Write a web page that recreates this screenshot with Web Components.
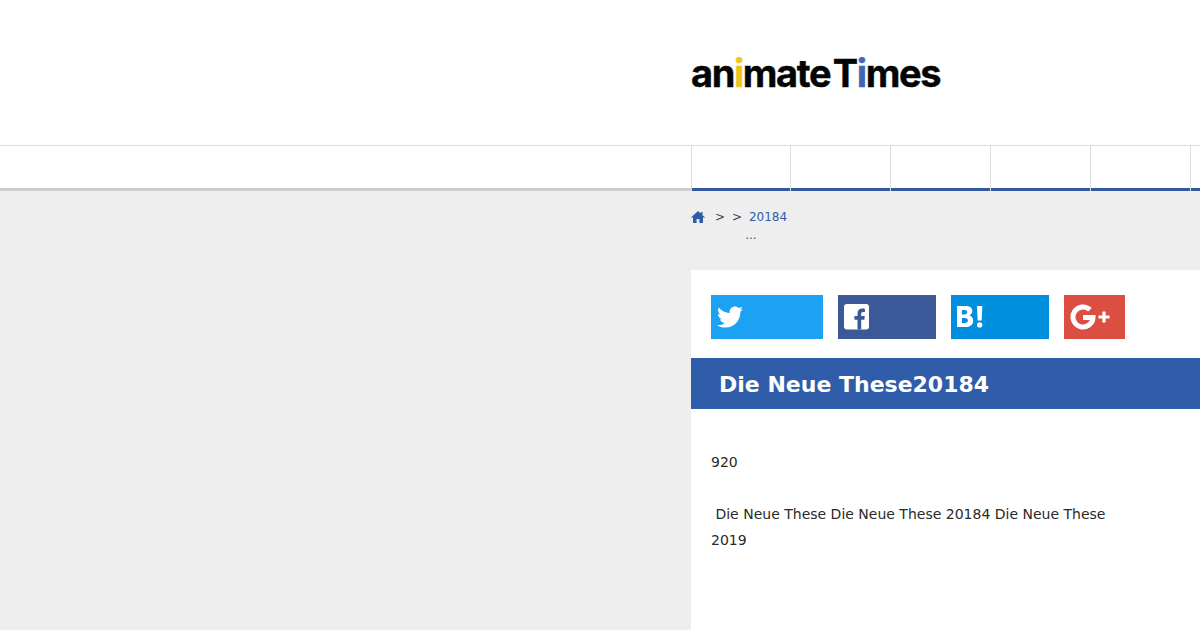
<!DOCTYPE html>
<html lang="ja">
<head>
<meta charset="utf-8">
<title>animate Times</title>
<style>
	html, body { margin: 0; height: 630px; overflow: hidden; background: #eee; }
	body { font-family: "DejaVu Sans", sans-serif; }
	at-page { height: 630px; }
</style>
</head>
<body>
<at-page>
	<at-header slot="header"></at-header>
	<at-nav slot="nav" count="6"></at-nav>
	<at-breadcrumb slot="crumb"></at-breadcrumb>
	<at-article slot="main">
		<at-share slot="share"></at-share>
		<span slot="title">Die Neue These20184</span>
		<p>920</p>
		<p>&nbsp;Die Neue These Die Neue These 20184 Die Neue These 2019</p>
	</at-article>
</at-page>

<script>
class AtPage extends HTMLElement {
	constructor() {
		super();
		this.attachShadow({ mode: 'open' });
		this.shadowRoot.innerHTML = `
			<style>
				:host { display: flex; flex-direction: column; }
				.body { flex: 1; display: grid; grid-template-columns: 691px 1fr; min-height: 0; }
				.col { display: flex; flex-direction: column; min-height: 0; }
			</style>
			<slot name="header"></slot>
			<slot name="nav"></slot>
			<div class="body">
				<div></div>
				<div class="col">
					<slot name="crumb"></slot>
					<slot name="main"></slot>
				</div>
			</div>
		`;
	}
}
customElements.define('at-page', AtPage);

class AtHeader extends HTMLElement {
	constructor() {
		super();
		this.attachShadow({ mode: 'open' });
		this.shadowRoot.innerHTML = `
			<style>
				:host { display: grid; grid-template-columns: 691px 1fr; align-items: center; height: 145px; background: #fff; }
				.logo {
					grid-column: 2;
					font: 700 38px/1 Inter, "Liberation Sans", sans-serif;
					letter-spacing: -1.4px;
					word-spacing: -5px;
					color: #050505;
					white-space: pre;
					-webkit-text-stroke: .4px #050505;
				}
				.y { color: #eec41f; -webkit-text-stroke-color: #eec41f; }
				.b { color: #3f65b5; -webkit-text-stroke-color: #3f65b5; }
			</style>
			<div class="logo">an<span class="y">i</span>mate T<span class="b">i</span>mes</div>
		`;
	}
}
customElements.define('at-header', AtHeader);

class AtNav extends HTMLElement {
	constructor() {
		super();
		this.attachShadow({ mode: 'open' });
		const n = parseInt(this.getAttribute('count')) || 6;
		let items = '';
		for (let i = 0; i < n; i++) items += '<div class="item"><div class="bar"></div></div>';
		this.shadowRoot.innerHTML = `
			<style>
				:host {
					display: grid;
					grid-template-columns: 691px 1fr;
					height: 46px;
					box-sizing: border-box;
					background: #fff;
					border-top: 1px solid #ddd;
				}
				.left { border-bottom: 3px solid #ccc; }
				.right { display: flex; overflow: hidden; }
				.item {
					flex: 0 0 100px;
					display: flex;
					box-sizing: border-box;
					border-left: 1px solid #ddd;
				}
				.item:first-child { flex-basis: 99px; }
				.bar { flex: 1; border-bottom: 3px solid #33589f; }
			</style>
			<div class="left"></div>
			<div class="right">${items}</div>
		`;
	}
}
customElements.define('at-nav', AtNav);

class AtBreadcrumb extends HTMLElement {
	constructor() {
		super();
		this.attachShadow({ mode: 'open' });
		this.shadowRoot.innerHTML = `
			<style>
				:host {
					display: flex;
					height: 79px;
					box-sizing: border-box;
					padding-top: 17px;
					font-size: 12px;
					line-height: 18px;
					color: #444;
				}
				svg { display: block; margin-top: 2px; }
				.sep { margin-left: 10px; }
				.sep + .sep { margin-left: 7px; }
				.last { margin-left: 3px; color: #305da9; white-space: pre; }
			</style>
			<svg width="14" height="14" viewBox="0 0 14 14"><path fill="#305da9" d="M7 1 .2 7.3l.7.8L2 7.1V13h3.6V9h2.8v4H12V7.1l1.1 1 .7-.8L11.5 5.2V2H9.8v1.6z"/></svg>
			<span class="sep">&gt;</span>
			<span class="sep">&gt;</span>
			<div class="last"> 20184
...</div>
		`;
	}
}
customElements.define('at-breadcrumb', AtBreadcrumb);

const SHARE_ICONS = {
	twitter: `<svg width="26" height="26" viewBox="0 0 512 512"><path fill="#fff" d="M459.37 151.716c.325 4.548.325 9.097.325 13.645 0 138.72-105.583 298.558-298.558 298.558-59.452 0-114.68-17.219-161.137-47.106 8.447.974 16.568 1.299 25.34 1.299 49.055 0 94.213-16.568 130.274-44.832-46.132-.975-84.792-31.188-98.112-72.772 6.498.974 12.995 1.624 19.818 1.624 9.421 0 18.843-1.3 27.614-3.573-48.081-9.747-84.143-51.98-84.143-102.985v-1.299c13.969 7.797 30.214 12.67 47.431 13.319-28.264-18.843-46.781-51.005-46.781-87.391 0-19.492 5.197-37.36 14.294-52.954 51.655 63.675 129.3 105.258 216.365 109.807-1.624-7.797-2.599-15.918-2.599-24.04 0-57.828 46.782-104.934 104.934-104.934 30.213 0 57.502 12.67 76.67 33.137 23.715-4.548 46.456-13.32 66.599-25.34-7.798 24.366-24.366 44.833-46.132 57.827 21.117-2.273 41.584-8.122 60.426-16.243-14.292 20.791-32.161 39.308-52.628 54.253z"/></svg>`,
	facebook: `<svg width="25" height="26" viewBox="0 0 25 26"><rect width="25" height="25.5" rx="3" fill="#fff"/><path fill="#3b5998" d="M17.2 25.5v-9.7h3.1l.5-3.7h-3.6V9.900c0-1.100.4-1.800 1.900-1.800h1.800V4.800c-.4-.1-1.500-.2-2.700-.2-2.800 0-4.700 1.700-4.700 4.800v2.700h-3.100v3.700h3.100v9.700z"/></svg>`,
	hatena: `<svg width="26" height="22" viewBox="0 0 26 22"><path fill="#fff" fill-rule="evenodd" d="M0 0h8.500c4.400 0 6.800 1.700 6.800 5 0 2.200-1.200 3.700-3.100 4.400 2.500.5 4 2.300 4 5 0 4.100-3 6.600-7.800 6.600H0zM4.900 4v4.400h2.600c1.700 0 2.700-.8 2.700-2.200S9.200 4 7.500 4zm0 8v5h3c1.900 0 3-.9 3-2.500s-1.100-2.500-3-2.500zM20 0h5.300l-.6 14.500H20.600zM22.700 16.200a2.700 2.700 0 1 1 0 5.400 2.700 2.700 0 0 1 0-5.400z"/></svg>`,
	google: `<svg width="40" height="26" viewBox="0 0 40 26"><g fill="none" stroke="#fff"><path stroke-width="5" d="M20 5.800A10 10 0 1 0 23 13.500H13"/><path stroke-width="3.2" d="M34 7.500v11M28.500 13h11"/></g></svg>`
};

class AtShareButton extends HTMLElement {
	constructor() {
		super();
		this.attachShadow({ mode: 'open' });
		const name = this.getAttribute('name');
		this.shadowRoot.innerHTML = `
			<style>
				:host {
					display: flex;
					align-items: center;
					box-sizing: border-box;
					height: 44px;
					padding-left: 6px;
					width: ${this.getAttribute('width')}px;
					background: ${this.getAttribute('color')};
				}
				svg { display: block; }
			</style>
			${SHARE_ICONS[name]}
		`;
	}
}
customElements.define('at-share-button', AtShareButton);

class AtShare extends HTMLElement {
	constructor() {
		super();
		this.attachShadow({ mode: 'open' });
		this.shadowRoot.innerHTML = `
			<style>
				:host { display: flex; gap: 15px; padding: 25px 20px 19px; }
			</style>
			<at-share-button name="twitter" width="112" color="#1da1f2"></at-share-button>
			<at-share-button name="facebook" width="98" color="#3b5998"></at-share-button>
			<at-share-button name="hatena" width="98" color="#008fde"></at-share-button>
			<at-share-button name="google" width="61" color="#dc4e41"></at-share-button>
		`;
	}
}
customElements.define('at-share', AtShare);

class AtArticle extends HTMLElement {
	constructor() {
		super();
		this.attachShadow({ mode: 'open' });
		this.shadowRoot.innerHTML = `
			<style>
				:host { display: block; flex: 1; background: #fff; }
				.title {
					height: 51px;
					box-sizing: border-box;
					padding-left: 28px;
					font-size: 22px;
					font-weight: 700;
					line-height: 53px;
					color: #fff;
					background: #305da9;
				}
				.text {
					padding: 40px 75px 0 20px;
					font-size: 14px;
					line-height: 26px;
					color: #2a2a2a;
				}
				::slotted(p) { margin: 0 0 26px; }
			</style>
			<slot name="share"></slot>
			<div class="title"><slot name="title"></slot></div>
			<div class="text"><slot></slot></div>
		`;
	}
}
customElements.define('at-article', AtArticle);
</script>
</body>
</html>
